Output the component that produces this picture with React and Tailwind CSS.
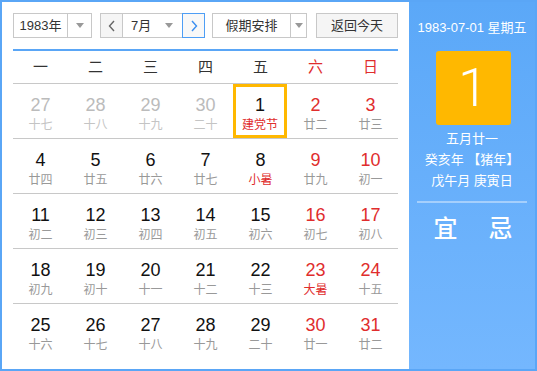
import React from "react";

const weekDays = ["一", "二", "三", "四", "五", "六", "日"];

// [day, lunar, flags] flags: o = other month, r = red lunar text, s = selected
const weeks = [
  [[27, "十七", "o"], [28, "十八", "o"], [29, "十九", "o"], [30, "二十", "o"], [1, "建党节", "rs"], [2, "廿二"], [3, "廿三"]],
  [[4, "廿四"], [5, "廿五"], [6, "廿六"], [7, "廿七"], [8, "小暑", "r"], [9, "廿九"], [10, "初一"]],
  [[11, "初二"], [12, "初三"], [13, "初四"], [14, "初五"], [15, "初六"], [16, "初七"], [17, "初八"]],
  [[18, "初九"], [19, "初十"], [20, "十一"], [21, "十二"], [22, "十三"], [23, "大暑", "r"], [24, "十五"]],
  [[25, "十六"], [26, "十七"], [27, "十八"], [28, "十九"], [29, "二十"], [30, "廿一"], [31, "廿二"]],
];

function Caret() {
  return (
    <span className="w-0 h-0 border-l-[4px] border-r-[4px] border-t-[5px] border-l-transparent border-r-transparent border-t-[#999]"></span>
  );
}

function Chevron({ dir, color }) {
  return (
    <svg width="10" height="12" viewBox="0 0 10 12">
      <path
        d={dir === "left" ? "M7 1 L2.5 6 L7 11" : "M3 1 L7.5 6 L3 11"}
        fill="none"
        stroke={color}
        strokeWidth="1.4"
      />
    </svg>
  );
}

export default function App() {
  return (
    <div
      className="w-[537px] h-[371px] border-2 border-[#5aa6f6] flex bg-white text-[#333]"
      style={{ fontFamily: '"Liberation Sans", "Noto Sans CJK SC", sans-serif' }}
    >
      <div className="w-[407px] px-[11px] pt-[11px]">
        <div className="flex h-[25px] text-[13px]">
          <div className="w-[79px] flex border border-[#c8c8c8]">
            <div className="flex-1 flex items-center justify-center">1983年</div>
            <div className="w-[24px] border-l border-[#c8c8c8] flex items-center justify-center">
              <Caret />
            </div>
          </div>
          <div className="w-[105px] ml-[8px] flex">
            <div className="w-[23px] border border-[#c8c8c8] bg-[#f5f5f5] flex items-center justify-center">
              <Chevron dir="left" color="#666" />
            </div>
            <div className="flex-1 border-y border-[#c8c8c8] flex items-center pl-[8px] pr-[9px]">
              <span className="flex-1">7月</span>
              <Caret />
            </div>
            <div className="w-[23px] border border-[#4e9ef5] bg-[#f8f8f8] flex items-center justify-center">
              <Chevron dir="right" color="#3a8ef0" />
            </div>
          </div>
          <div className="w-[95px] ml-[7px] flex border border-[#c8c8c8]">
            <div className="flex-1 flex items-center justify-center">假期安排</div>
            <div className="w-[16px] border-l border-[#c8c8c8] flex items-center justify-center">
              <Caret />
            </div>
          </div>
          <div className="w-[82px] ml-[9px] border border-[#c8c8c8] bg-[#f5f5f5] flex items-center justify-center">
            返回今天
          </div>
        </div>

        <div className="mt-[11px] h-[2px] bg-[#5aa6f6]"></div>

        <div className="grid grid-cols-7 h-[33px] border-b border-[#c8c8c8] text-[15px]">
          {weekDays.map((d, i) => (
            <div
              key={i}
              className={`flex items-center justify-center ${i >= 5 ? "text-[#e02d2d]" : "text-[#333]"}`}
            >
              {d}
            </div>
          ))}
        </div>

        {weeks.map((week, wi) => (
          <div
            key={wi}
            className={`grid grid-cols-7 h-[55px] ${wi < 4 ? "border-b border-[#c8c8c8]" : ""}`}
          >
            {week.map(([day, lunar, flags = ""], di) => {
              const other = flags.includes("o");
              const sel = flags.includes("s");
              const redNum = !other && di >= 5;
              return (
                <div
                  key={di}
                  className={`flex flex-col items-center ${
                    sel ? "border-[3px] border-[#ffb800] pt-[7px] mr-px h-[54px]" : "pt-[10px]"
                  }`}
                >
                  <div
                    className={`text-[18px] leading-[22px] ${
                      other ? "text-[#bbb]" : redNum ? "text-[#e02d2d]" : "text-[#111]"
                    }`}
                  >
                    {day}
                  </div>
                  <div
                    className={`mt-px text-[12px] leading-[16px] ${
                      flags.includes("r") ? "text-[#e02d2d]" : other ? "text-[#c4c4c4]" : "text-[#999]"
                    }`}
                  >
                    {lunar}
                  </div>
                </div>
              );
            })}
          </div>
        ))}
      </div>

      <div className="flex-1 bg-gradient-to-b from-[#5ba8f8] to-[#74b7fe] text-white flex flex-col items-center">
        <div className="mt-[16px] h-[20px] leading-[20px] text-[13px]">1983-07-01 星期五</div>
        <div
          className="mt-[13px] ml-[2px] w-[75px] h-[74px] rounded-[3px] bg-[#ffb800] flex items-center justify-center text-[54px] font-light leading-none"
          style={{ fontFamily: "Roboto, sans-serif" }}
        >
          1
        </div>
        <div className="mt-[3px] text-[13px] leading-[21px] text-center">
          <div>五月廿一</div>
          <div>癸亥年 【猪年】</div>
          <div>戊午月 庚寅日</div>
        </div>
        <div className="mt-[10px] w-[110px] h-[2px] bg-white/40"></div>
        <div className="mt-[11px] ml-[2px] flex gap-[31px] text-[24px] leading-[30px] font-medium">
          <span>宜</span>
          <span>忌</span>
        </div>
      </div>
    </div>
  );
}
